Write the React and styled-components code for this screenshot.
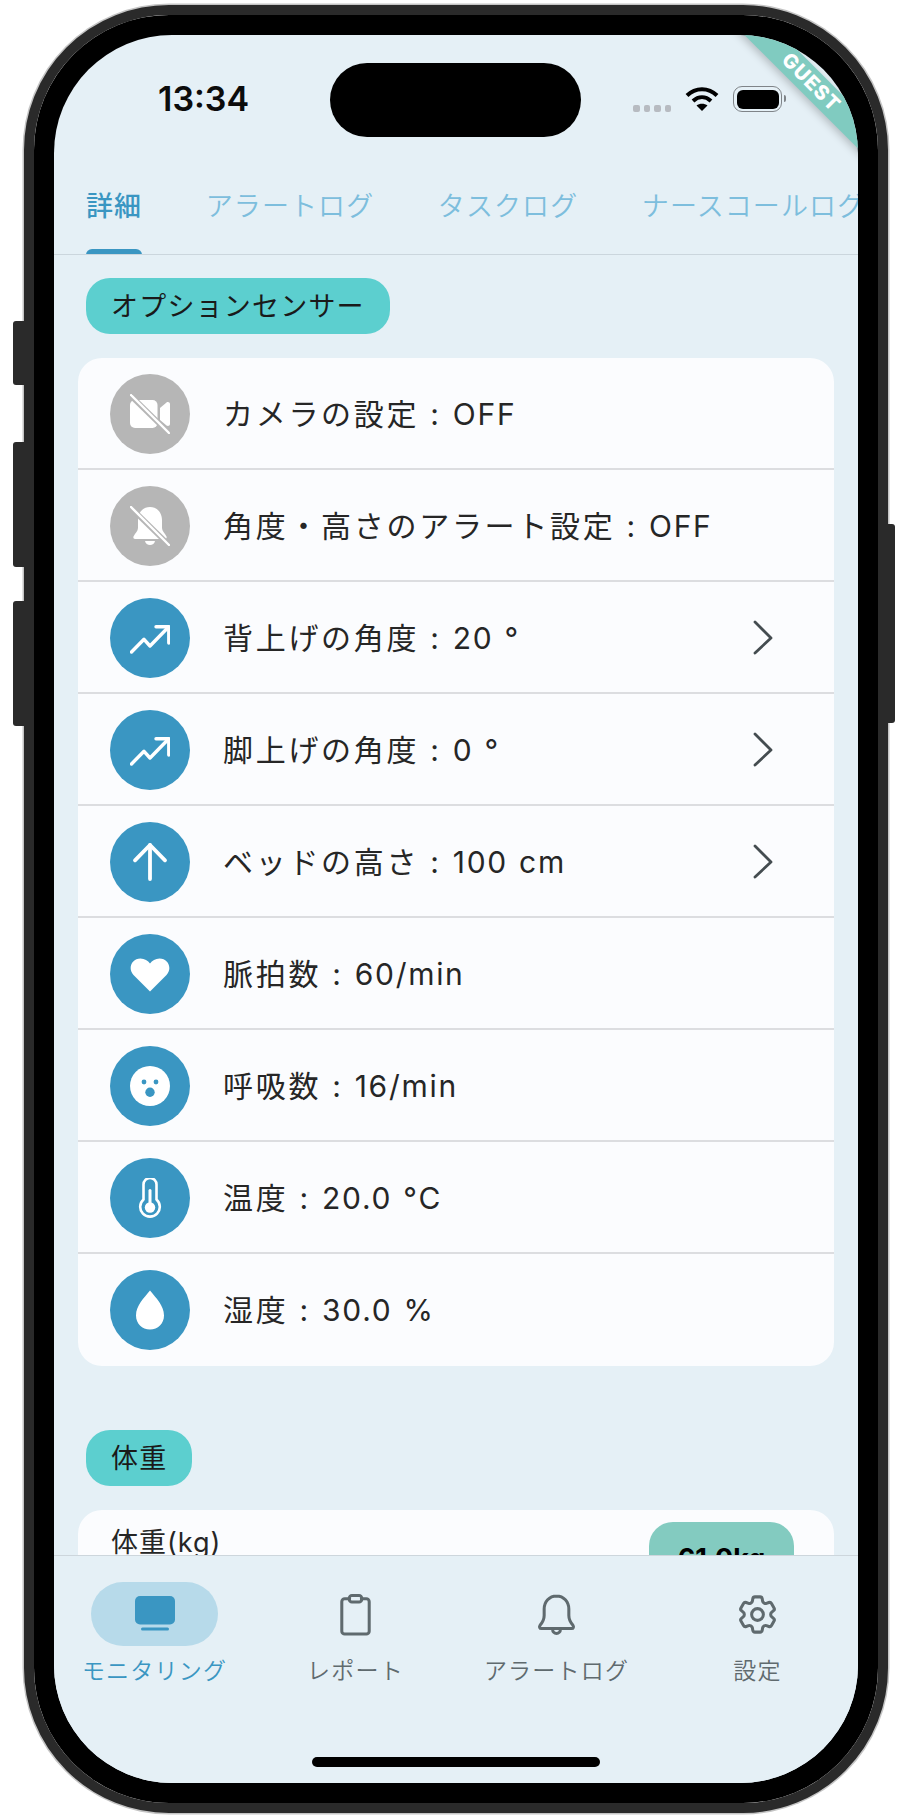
import React from 'react';
import styled, { createGlobalStyle } from 'styled-components';

const Global = createGlobalStyle`
  html, body { margin: 0; padding: 0; background: #fff; }
  body { font-family: Inter, "Noto Sans CJK JP", sans-serif; }
  #root { width: 912px; height: 1819px; overflow: hidden; }
`;

const Page = styled.div`
  width: 912px;
  height: 1819px;
  box-sizing: border-box;
  padding: 5px 0 0 24px;
  background: #fff;
`;

const Device = styled.div`
  position: relative;
  width: 864px;
  height: 1808px;
  box-sizing: border-box;
  padding: 20px;
  background: #000;
  border-radius: 145px;
  border: 10px solid #2a2a2a;
  box-shadow: 0 0 0 1.5px #c4c4c4;
  background-clip: padding-box;
`;

const SideButton = styled.div`
  position: absolute;
  top: ${(p) => p.$top}px;
  height: ${(p) => p.$height}px;
  background: #2a2a2a;
  ${(p) => (p.$right ? 'right: -17px; width: 17px; border-radius: 0 3px 3px 0;' : 'left: -21px; width: 11px; border-radius: 3px 0 0 3px;')}
`;

const Screen = styled.div`
  position: relative;
  width: 804px;
  height: 1748px;
  display: flex;
  flex-direction: column;
  overflow: hidden;
  background: #e5f0f6;
  border-radius: 118px;
`;

const Island = styled.div`
  position: absolute;
  top: 28px;
  left: 276px;
  width: 251px;
  height: 74px;
  border-radius: 37px;
  background: #000;
`;

const StatusBar = styled.div`
  height: 125px;
  flex: none;
  box-sizing: border-box;
  padding: 36px 76px 0 104px;
  display: flex;
  justify-content: space-between;
  align-items: flex-start;
`;

const Time = styled.div`
  font: 600 34px/40px Inter, sans-serif;
  padding-top: 8px;
  color: #0c0c0c;
`;

const StatusIcons = styled.div`
  display: flex;
  align-items: flex-start;
  gap: 14px;
  padding-top: 15px;
`;

const Dots = styled.div`
  display: flex;
  gap: 4px;
  padding-top: 19px;
`;

const Dot = styled.span`
  width: 6.5px;
  height: 6.5px;
  border-radius: 2px;
  background: #b7bbc1;
`;

const BatteryShell = styled.div`
  width: 49px;
  height: 26px;
  box-sizing: border-box;
  border: 1.5px solid #7f8488;
  border-radius: 9px;
  padding: 2.5px;
  position: relative;
  &::before {
    content: '';
    display: block;
    height: 100%;
    border-radius: 6px;
    background: #000;
  }
  &::after {
    content: '';
    position: absolute;
    right: -5px;
    top: 7.500px;
    width: 2.5px;
    height: 7px;
    border-radius: 0 3px 3px 0;
    background: #7f8488;
  }
`;

const Ribbon = styled.div`
  position: absolute;
  top: 33.500px;
  right: -83px;
  width: 260px;
  height: 27px;
  transform: rotate(45deg);
  background: #80cbc0;
  color: #fff;
  font: 800 20px/27px Inter, sans-serif;
  letter-spacing: 1px;
  text-align: center;
  box-shadow: 0 3px 8px rgba(0, 0, 0, 0.22);
`;

const Tabs = styled.div`
  flex: none;
  height: 95px;
  box-sizing: border-box;
  display: flex;
  padding-left: 32px;
  border-bottom: 1.5px solid #cbd6dd;
  white-space: nowrap;
  overflow: hidden;
`;

const Tab = styled.div`
  position: relative;
  flex: none;
  margin-right: 63.500px;
  padding-top: 27px;
  font-family: Inter, "Noto Sans CJK JP", sans-serif;
  font-size: 27px;
  line-height: 40px;
  letter-spacing: 1.100px;
  font-weight: ${(p) => (p.$active ? 500 : 350)};
  color: ${(p) => (p.$active ? '#3a96c2' : '#7dbedd')};
  ${(p) =>
    p.$active &&
    `&::after {
      content: '';
      position: absolute;
      left: 0;
      right: 0;
      bottom: -1px;
      height: 6px;
      border-radius: 6px 6px 0 0;
      background: #3a96c2;
    }`}
`;

const Scroll = styled.div`
  flex: 1;
  min-height: 0;
  overflow: hidden;
  padding: 23px 24px 0;
`;

const SectionPill = styled.div`
  display: inline-block;
  height: 56px;
  box-sizing: border-box;
  margin-left: 8px;
  padding: 0 25px;
  border-radius: 24px;
  background: #5ccfcf;
  color: #1a1a1a;
  font-size: 27px;
  line-height: 57px;
  letter-spacing: 1.200px;
  vertical-align: top;
`;

const Card = styled.div`
  margin-top: 24px;
  margin-bottom: 64px;
  background: #fbfcfe;
  border-radius: 24px;
  overflow: hidden;
`;

const Row = styled.div`
  height: 112px;
  box-sizing: border-box;
  display: flex;
  align-items: center;
  padding: 0 60px 0 32px;
  &:not(:last-child) {
    box-shadow: inset 0 -2px 0 #dcdde0;
  }
`;

const IconCircle = styled.div`
  flex: none;
  width: 80px;
  height: 80px;
  border-radius: 50%;
  display: flex;
  align-items: center;
  justify-content: center;
  background: ${(p) => (p.$off ? '#b6b6b6' : '#3a96c2')};
`;

const RowLabel = styled.div`
  flex: 1;
  margin-left: 33px;
  color: #262626;
  font-size: 30px;
  letter-spacing: 2.700px;
  line-height: 40px;
  white-space: nowrap;
`;

const RowValue = styled.span`
  letter-spacing: 1.700px;
  word-spacing: 1px;
`;

const WeightCard = styled.div`
  margin-top: 24px;
  height: 140px;
  background: #fbfcfe;
  border-radius: 24px;
  box-sizing: border-box;
  padding: 12px 40px 0 33px;
  display: flex;
  justify-content: space-between;
  align-items: flex-start;
`;

const WeightLabel = styled.div`
  color: #262626;
  font-size: 27px;
  line-height: 36px;
  margin-top: 3px;
  letter-spacing: 1px;
`;

const WeightValue = styled.div`
  width: 145px;
  height: 80px;
  border-radius: 24px;
  background: #83cbc0;
  color: #000;
  font: 700 27px/74px Inter, sans-serif;
  text-align: center;
`;

const BottomNav = styled.div`
  flex: none;
  position: relative;
  height: 228px;
  box-sizing: border-box;
  border-top: 1.5px solid #cdd6dc;
  background: #e5f0f6;
  display: grid;
  grid-template-columns: repeat(4, 1fr);
  padding-top: 26px;
`;

const NavItem = styled.div`
  display: flex;
  flex-direction: column;
  align-items: center;
  color: ${(p) => (p.$active ? '#3a96c2' : '#5f6a6e')};
`;

const NavIconWrap = styled.div`
  width: 127px;
  height: 64px;
  border-radius: 32px;
  display: flex;
  align-items: center;
  justify-content: center;
  background: ${(p) => (p.$active ? '#b7daea' : 'transparent')};
`;

const NavLabel = styled.div`
  margin-top: 9px;
  font-size: 23px;
  line-height: 32px;
  letter-spacing: 1.200px;
  white-space: nowrap;
  font-weight: 350;
`;

const HomeBar = styled.div`
  position: absolute;
  left: 258px;
  bottom: 16px;
  width: 288px;
  height: 10px;
  border-radius: 5px;
  background: #000;
`;

const Chevron = () => (
  <svg width="22" height="36" viewBox="0 0 22 36" fill="none" stroke="#444c50" strokeWidth="2.800" strokeLinecap="round" strokeLinejoin="round">
    <path d="M3 2l16 16-16 15" />
  </svg>
);

const Glyph = ({ children, ...rest }) => (
  <svg width="40" height="40" viewBox="0 0 40 40" fill="none" {...rest}>{children}</svg>
);

const VideoOff = () => (
  <Glyph>
    <rect x="0" y="6" width="27.500" height="28" rx="5" fill="#fff" />
    <path d="M30 14l6.500-5.500c1.300-1 3.500-.3 3.500 1.500v20c0 1.800-2.200 2.500-3.500 1.500L30 26z" fill="#fff" />
    <path d="M0 1l39 38" stroke="#b6b6b6" strokeWidth="5.500" />
    <path d="M1 1l38 38" stroke="#fff" strokeWidth="2.400" strokeLinecap="round" />
  </Glyph>
);

const BellOff = () => (
  <Glyph>
    <path d="M20 1c7.500 0 12 6 12 13v8c0 3 3 5.500 4.500 8.500.5 1.200-.2 2.500-1.500 2.500H5c-1.300 0-2-1.300-1.500-2.500C5 27.500 8 25 8 22v-8C8 7 12.500 1 20 1z" fill="#fff" />
    <path d="M15 35h10c-.5 2.600-2.500 4-5 4s-4.500-1.400-5-4z" fill="#fff" />
    <path d="M0 1l39 38" stroke="#b6b6b6" strokeWidth="5.500" />
    <path d="M1 1l38 38" stroke="#fff" strokeWidth="2.400" strokeLinecap="round" />
  </Glyph>
);

const Trend = () => (
  <Glyph stroke="#fff" strokeWidth="3.400" strokeLinecap="round" strokeLinejoin="round">
    <path d="M1.500 34l12.500-12.700L20 28 38.500 9" />
    <path d="M26 8.700h12.800V25" />
  </Glyph>
);

const ArrowUp = () => (
  <Glyph stroke="#fff" strokeWidth="3.800" strokeLinecap="round" strokeLinejoin="round">
    <path d="M20 37V3" />
    <path d="M5 18.300L20 3l15 15.300" />
  </Glyph>
);

const Heart = () => (
  <Glyph>
    <path d="M20 37.500L3.500 21C-2.500 14.500 1.500 4.500 10.500 4.500c4 0 7.500 2.200 9.500 5 2-2.800 5.500-5 9.500-5 9 0 13 10 7 16.500z" fill="#fff" />
  </Glyph>
);

const Face = () => (
  <Glyph>
    <circle cx="20" cy="20" r="20" fill="#fff" />
    <circle cx="14" cy="16" r="2.400" fill="#3a96c2" />
    <circle cx="26" cy="16" r="2.400" fill="#3a96c2" />
    <circle cx="20" cy="26.300" r="4.700" fill="#3a96c2" />
  </Glyph>
);

const Thermo = () => (
  <Glyph>
    <path d="M13.500 21.500V6.500a6.500 6.500 0 0 1 13 0v15a9.800 9.800 0 1 1-13 0z" stroke="#fff" strokeWidth="2.600" />
    <circle cx="20" cy="29.500" r="5.200" fill="#fff" />
    <rect x="18.500" y="11" width="3" height="18" rx="1.500" fill="#fff" />
  </Glyph>
);

const Drop = () => (
  <Glyph>
    <path d="M20 .5C26 8 34 15.500 34 25.500 34 33.500 28 39.500 20 39.500S6 33.500 6 25.500C6 15.500 14 8 20 .5z" fill="#fff" />
  </Glyph>
);

const NavGlyph = ({ children, size = 47 }) => (
  <svg width={size} height={size} viewBox="0 0 24 24" fill="none" stroke="currentColor" strokeWidth="1.550" strokeLinecap="round" strokeLinejoin="round">{children}</svg>
);

const Monitor = () => (
  <svg width="40" height="36" viewBox="0 0 40 36" fill="#3a96c2">
    <rect x="0" y="0" width="40" height="28.500" rx="5" />
    <rect x="6" y="31.500" width="28" height="3" rx="1.500" />
  </svg>
);

const rows = [
  { icon: <VideoOff />, off: true, label: 'カメラの設定 : ', value: 'OFF' },
  { icon: <BellOff />, off: true, label: '角度・高さのアラート設定 : ', value: 'OFF' },
  { icon: <Trend />, label: '背上げの角度 : ', value: '20 °', more: true },
  { icon: <Trend />, label: '脚上げの角度 : ', value: '0 °', more: true },
  { icon: <ArrowUp />, label: 'ベッドの高さ : ', value: '100 cm', more: true },
  { icon: <Heart />, label: '脈拍数 : ', value: '60/min' },
  { icon: <Face />, label: '呼吸数 : ', value: '16/min' },
  { icon: <Thermo />, label: '温度 : ', value: '20.0 °C' },
  { icon: <Drop />, label: '湿度 : ', value: '30.0 %' },
];

export default function App() {
  return (
    <Page>
      <Global />
      <Device>
        <SideButton $top={306} $height={64} />
        <SideButton $top={427} $height={125} />
        <SideButton $top={586} $height={125} />
        <SideButton $right $top={509} $height={199} />
        <Screen>
          <StatusBar>
            <Time>13:34</Time>
            <StatusIcons>
              <Dots><Dot /><Dot /><Dot /><Dot /></Dots>
              <svg width="34" height="25" viewBox="0 0 34 25" fill="none" stroke="#000" strokeWidth="4">
                <path d="M2 9.500C10.500 1 23.500 1 32 9.500" />
                <path d="M8 15c5.500-5 12.500-5 18 0" />
                <path d="M17 25l-5.500-5.500c3-2.500 8-2.500 11 0z" fill="#000" stroke="none" />
              </svg>
              <BatteryShell />
            </StatusIcons>
          </StatusBar>
          <Tabs>
            <Tab $active>詳細</Tab>
            <Tab>アラートログ</Tab>
            <Tab>タスクログ</Tab>
            <Tab>ナースコールログ</Tab>
          </Tabs>
          <Scroll>
            <SectionPill>オプションセンサー</SectionPill>
            <Card>
              {rows.map((r) => (
                <Row key={r.label}>
                  <IconCircle $off={r.off}>{r.icon}</IconCircle>
                  <RowLabel>{r.label}<RowValue>{r.value}</RowValue></RowLabel>
                  {r.more && <Chevron />}
                </Row>
              ))}
            </Card>
            <SectionPill>体重</SectionPill>
            <WeightCard>
              <WeightLabel>体重(kg)</WeightLabel>
              <WeightValue>61.0kg</WeightValue>
            </WeightCard>
          </Scroll>
          <BottomNav>
            <NavItem $active>
              <NavIconWrap $active><Monitor /></NavIconWrap>
              <NavLabel>モニタリング</NavLabel>
            </NavItem>
            <NavItem>
              <NavIconWrap>
                <NavGlyph>
                  <path d="M9 4H6.500A1.500 1.500 0 0 0 5 5.500V20.500A1.500 1.500 0 0 0 6.500 22h11A1.500 1.500 0 0 0 19 20.500V5.500A1.500 1.500 0 0 0 17.500 4H15" />
                  <rect x="8.800" y="2.300" width="6.400" height="3.300" rx="1.400" />
                </NavGlyph>
              </NavIconWrap>
              <NavLabel>レポート</NavLabel>
            </NavItem>
            <NavItem>
              <NavIconWrap>
                <NavGlyph>
                  <path d="M12 2.500c-3.700 0-6.300 3-6.300 6.700v3.300c0 2.300-1 3.700-2.100 5-.5.700-.3 1.700.7 1.700h15.400c1 0 1.200-1 .7-1.700-1.100-1.300-2.100-2.700-2.100-5V9.200c0-3.700-2.600-6.700-6.300-6.700z" />
                  <path d="M10 19.500c0 1.300.9 2.200 2 2.200s2-.9 2-2.200" />
                </NavGlyph>
              </NavIconWrap>
              <NavLabel>アラートログ</NavLabel>
            </NavItem>
            <NavItem>
              <NavIconWrap>
                <NavGlyph>
                  <path d="M9.594 3.940c.09-.542.56-.94 1.110-.94h2.593c.55 0 1.020.398 1.110.940l.213 1.281c.063.374.313.686.645.870.074.040.147.083.220.127.325.196.720.257 1.075.124l1.217-.456a1.125 1.125 0 0 1 1.370.490l1.296 2.247a1.125 1.125 0 0 1-.260 1.431l-1.003.827c-.293.241-.438.613-.430.992a7.723 7.723 0 0 1 0 .255c-.008.378.137.750.430.991l1.004.827c.424.350.534.955.260 1.430l-1.298 2.247a1.125 1.125 0 0 1-1.369.491l-1.217-.456c-.355-.133-.750-.072-1.076.124a6.470 6.470 0 0 1-.220.128c-.331.183-.581.495-.644.869l-.213 1.281c-.090.543-.560.940-1.110.940h-2.594c-.550 0-1.019-.398-1.110-.940l-.213-1.281c-.062-.374-.312-.686-.644-.870a6.520 6.520 0 0 1-.220-.127c-.325-.196-.720-.257-1.076-.124l-1.217.456a1.125 1.125 0 0 1-1.369-.490l-1.297-2.247a1.125 1.125 0 0 1 .260-1.431l1.004-.827c.292-.240.437-.613.430-.991a6.932 6.932 0 0 1 0-.255c.007-.380-.138-.751-.430-.992l-1.004-.827a1.125 1.125 0 0 1-.260-1.430l1.297-2.247a1.125 1.125 0 0 1 1.370-.491l1.216.456c.356.133.751.072 1.076-.124.072-.044.146-.086.220-.128.332-.183.582-.495.644-.869l.214-1.280z" />
                  <circle cx="12" cy="12" r="3" />
                </NavGlyph>
              </NavIconWrap>
              <NavLabel>設定</NavLabel>
            </NavItem>
            <HomeBar />
          </BottomNav>
          <Island />
          <Ribbon>GUEST</Ribbon>
        </Screen>
      </Device>
    </Page>
  );
}
